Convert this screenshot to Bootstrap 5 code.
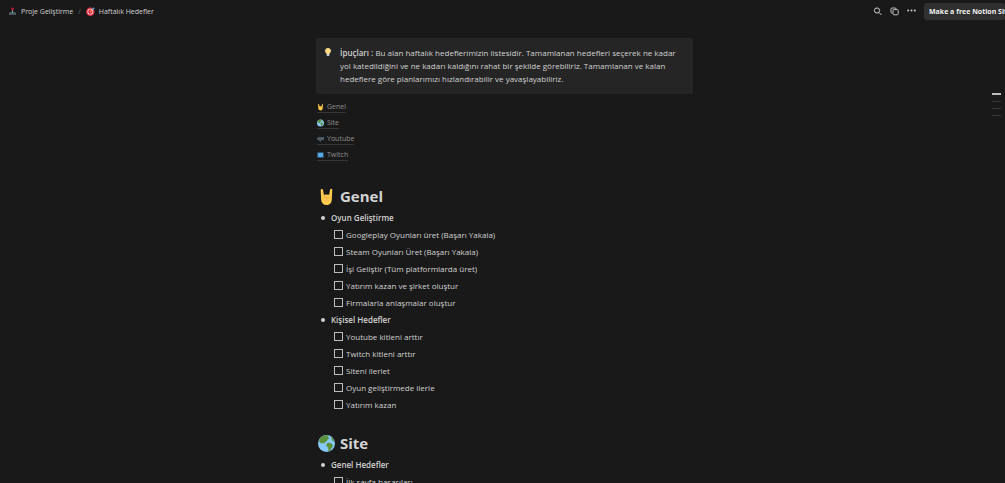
<!DOCTYPE html>
<html lang="tr" data-bs-theme="dark">
<head>
<meta charset="utf-8">
<meta name="viewport" content="width=device-width, initial-scale=1">
<title>Haftalık Hedefler</title>
<link href="https://cdn.jsdelivr.net/npm/bootstrap@5.3.0/dist/css/bootstrap.min.css" rel="stylesheet">
<style>
  body { background: #191919; color: #d2d2d2; font-family: "Open Sans", "Noto Sans", sans-serif; font-size: 8px; line-height: 13px; }
  .page { height: 100vh; overflow: hidden; }
  .topbar { height: 23px; padding-left: 8px; overflow: hidden; font-size: 7px; }
  .topbar a { color: #d2d2d2; }
  .topbar svg, .callout svg, .toc svg { flex: none; }
  .crumb-sep { color: #6f6f6f; margin: 0 5px; }
  .tool { color: #d0d0d0; line-height: 0; }
  .site-btn { background: #303030; color: #f0f0f0; font-size: 7px; font-weight: 700; line-height: 17px; border-radius: 3px; width: 81px; overflow: hidden; padding: 0 0 0 5px; text-align: left; }
  .doc { max-width: 377px; padding-top: 15px; }
  .callout { background: #252525; border-radius: 2px; padding: 8px 12px 9px 8px; }
  .toc { padding: 5px 0 2px 1px; }
  .toc li { height: 16px; display: flex; align-items: center; }
  .toc a { color: #8f8f8f; font-size: 7px; line-height: 10px; gap: 3px; border-bottom: 1px solid #353535; }
  h1 { font-size: 15px; font-weight: 700; line-height: 21px; color: #d4d4d4; margin: 0; }
  .section-title { padding: 0 0 2px 2px; gap: 5px; }
  .goal-section { padding-top: 21px; }
  .goal-section + .goal-section { padding-top: 20px; }
  .goals { padding-left: 5px; }
  .goal-name { display: flex; align-items: center; gap: 6px; height: 17px; font-weight: 600; }
  .goal-name::before { content: ""; width: 4px; height: 4px; border-radius: 50%; background: #d2d2d2; }
  .task { height: 17px; padding-left: 13px; gap: 3px; }
  .task input { appearance: none; width: 9px; height: 9px; border: 1px solid #bdbdbd; margin: 0; }
  .outline { top: 93px; right: 4px; gap: 6px; }
  .outline a { width: 9px; height: 1px; background: #373737; }
  .outline a.current { height: 2px; background: #bdbdbd; }
</style>
<script src="https://cdn.jsdelivr.net/npm/bootstrap@5.3.0/dist/js/bootstrap.bundle.min.js"></script>
</head>
<body>
<svg class="d-none" aria-hidden="true">
  <symbol id="horns" viewBox="0 0 16 16"><path fill="#ffcc4d" d="M2.500 2C2.500.6 4.600.6 4.800 2L5.600 6.500 7 6l3.500.3L11.400 1.500C11.700.2 13.500.3 13.400 1.800L13 10.500C13 14 11 16 8 16S3.300 14 3 11Z"/><path fill="none" stroke="#ef9645" stroke-width=".7" d="M5.500 7 6.200 9 7.500 8.800 8.300 10 10 9 11.300 9M7 11 9 12"/></symbol>
  <symbol id="globe" viewBox="0 0 16 16"><circle cx="8" cy="8" r="8" fill="#88c9f9"/><path fill="#5c913b" d="M2 2.800C4 1 7-.2 10 .5L9.500 2 11 3 9.300 4 8 6 6.700 6.500 6 8 4.500 7.500 3 8 1 6Z M8.500 7.500 11 7l3 2.200-.5 2.300L11 15 9.800 15.300 9.600 12 7.700 10Z M12 2l2 1 1.500 3-2-.5Z"/></symbol>
</svg>
<div class="page position-relative">
  <header class="topbar d-flex align-items-center justify-content-between">
    <nav class="d-flex align-items-center" aria-label="Konum">
      <a href="#" class="d-flex align-items-center text-decoration-none gap-1"><svg width="9" height="9" viewBox="0 0 9 9"><path d="M1 6 2 5H7L8 6V8H1Z" fill="#4d5a63"/><path d="M4 2h1v4H4Z" fill="#8899a6"/><circle cx="4.500" cy="1.800" r="1.400" fill="#be1931"/></svg><span>Proje Geliştirme</span></a>
      <span class="crumb-sep">/</span>
      <a href="#" class="d-flex align-items-center text-decoration-none gap-1"><svg width="9" height="9" viewBox="0 0 9 9"><circle cx="4.300" cy="4.700" r="4.200" fill="#dd2e44"/><circle cx="4.300" cy="4.700" r="2.900" fill="#f3c5ca"/><circle cx="4.300" cy="4.700" r="2.100" fill="#dd2e44"/><path d="m4 5 3-3" stroke="#ffac33"/><path d="M6 2 8 0 7.800 1.200 9 1 7 3Z" fill="#55acee"/></svg><span>Haftalık Hedefler</span></a>
    </nav>
    <div class="d-flex align-items-center gap-2">
      <button class="tool btn p-0 border-0" aria-label="Ara"><svg width="9" height="9" viewBox="0 0 9 9" fill="none" stroke="currentColor"><circle cx="4" cy="3.500" r="2.600"/><path d="m6 5.500 2.500 2.500"/></svg></button>
      <button class="tool btn p-0 border-0" aria-label="Kopyala"><svg width="9" height="9" viewBox="0 0 9 9" fill="none" stroke="currentColor" stroke-width=".9"><rect x="3" y="2.600" width="5.200" height="5.200" rx="1"/><path d="M2.500 6H1.800Q1 6 1 5V2Q1 1 2 1H5Q6 1 6 1.800V2.500"/></svg></button>
      <button class="tool btn p-0 border-0" aria-label="Diğer"><svg width="9" height="9" viewBox="0 0 9 9" fill="currentColor"><circle cx="1.200" cy="3.500" r="1"/><circle cx="4.500" cy="3.500" r="1"/><circle cx="7.800" cy="3.500" r="1"/></svg></button>
      <button class="site-btn border-0 text-nowrap">Make a free Notion Site</button>
    </div>
  </header>

  <nav class="outline position-absolute d-flex flex-column" aria-label="Bölümler"><a href="#genel" class="current" aria-label="Genel"></a><a href="#site" aria-label="Site"></a><a href="#" aria-label="Youtube"></a><a href="#" aria-label="Twitch"></a></nav>

  <div class="ps-1">
  <main class="doc mx-auto">
    <aside class="callout d-flex gap-2">
      <svg width="8" height="13" viewBox="0 0 8 13"><path d="M4 2C2 2 1 3.500 1 5c0 1.300 1.300 2 1.500 3h3C5.700 7 7 6.300 7 5 7 3.500 6 2 4 2Z" fill="#ffd983"/><path d="M2.600 8h2.800v1.400L4 10.200 2.600 9.400Z" fill="#ccd6dd"/></svg>
      <div><b class="fw-semibold">İpuçları :</b> Bu alan haftalık hedeflerimizin listesidir. Tamamlanan hedefleri seçerek ne kadar yol katedildiğini ve ne kadarı kaldığını rahat bir şekilde görebiliriz. Tamamlanan ve kalan hedeflere göre planlarımızı hızlandırabilir ve yavaşlayabiliriz.</div>
    </aside>

    <ul class="toc list-unstyled mb-0">
      <li><a href="#genel" class="d-flex align-items-center text-decoration-none"><svg width="7" height="8"><use href="#horns"/></svg>Genel</a></li>
      <li><a href="#site" class="d-flex align-items-center text-decoration-none"><svg width="7" height="8"><use href="#globe"/></svg>Site</a></li>
      <li><a href="#" class="d-flex align-items-center text-decoration-none"><svg width="7" height="8" viewBox="0 0 7 8"><path d="M0 3 2 2H7V5H5L3 7 2 5H0Z" fill="#4f5b64"/></svg>Youtube</a></li>
      <li><a href="#" class="d-flex align-items-center text-decoration-none"><svg width="7" height="8" viewBox="0 0 7 8"><rect y="1" width="7" height="6" rx="1" fill="#31526b"/><rect x="1" y="2" width="5" height="4" rx="1" fill="#55acee"/></svg>Twitch</a></li>
    </ul>

    <section id="genel" class="goal-section">
      <div class="section-title d-flex align-items-center"><svg width="17" height="17"><use href="#horns"/></svg><h1>Genel</h1></div>
      <ul class="goals list-unstyled mb-0">
        <li><div class="goal-name">Oyun Geliştirme</div>
          <label class="task d-flex align-items-center"><input type="checkbox">Googleplay Oyunları üret (Başarı Yakala)</label>
          <label class="task d-flex align-items-center"><input type="checkbox">Steam Oyunları Üret (Başarı Yakala)</label>
          <label class="task d-flex align-items-center"><input type="checkbox">İşi Geliştir (Tüm platformlarda üret)</label>
          <label class="task d-flex align-items-center"><input type="checkbox">Yatırım kazan ve şirket oluştur</label>
          <label class="task d-flex align-items-center"><input type="checkbox">Firmalarla anlaşmalar oluştur</label></li>
        <li><div class="goal-name">Kişisel Hedefler</div>
          <label class="task d-flex align-items-center"><input type="checkbox">Youtube kitleni arttır</label>
          <label class="task d-flex align-items-center"><input type="checkbox">Twitch kitleni arttır</label>
          <label class="task d-flex align-items-center"><input type="checkbox">Siteni ilerlet</label>
          <label class="task d-flex align-items-center"><input type="checkbox">Oyun geliştirmede ilerle</label>
          <label class="task d-flex align-items-center"><input type="checkbox">Yatırım kazan</label></li>
      </ul>
    </section>

    <section id="site" class="goal-section">
      <div class="section-title d-flex align-items-center"><svg width="17" height="17"><use href="#globe"/></svg><h1>Site</h1></div>
      <ul class="goals list-unstyled mb-0">
        <li><div class="goal-name">Genel Hedefler</div>
          <label class="task d-flex align-items-center"><input type="checkbox">İlk sayfa başarıları</label></li>
      </ul>
    </section>
  </main>
  </div>
</div>
</body>
</html>
